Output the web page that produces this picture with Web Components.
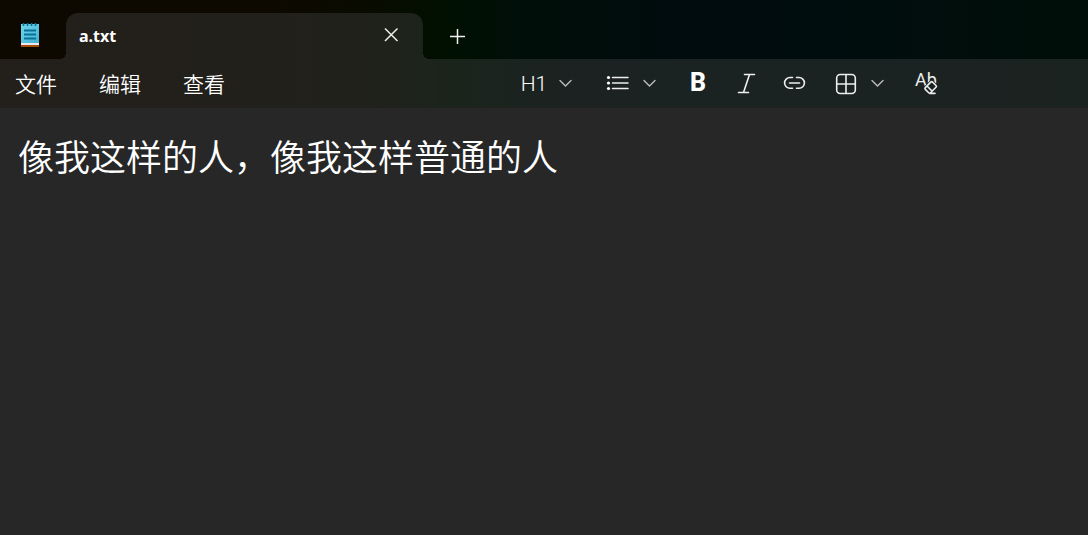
<!DOCTYPE html>
<html lang="zh-CN">
<head>
<meta charset="utf-8">
<title>a.txt</title>
<style>
html, body { height: 100%; margin: 0; }
body {
  background: #272727;
  color: #fff;
  font-family: "Noto Sans", "Noto Sans CJK SC", sans-serif;
}
</style>
</head>
<body>
<note-window>
  <note-tab slot="tabs">a.txt</note-tab>
  <menu-item slot="menu">文件</menu-item>
  <menu-item slot="menu">编辑</menu-item>
  <menu-item slot="menu">查看</menu-item>
  <tool-button slot="tools" menu label="标题"><span>H1</span></tool-button>
  <tool-button slot="tools" menu label="列表">
    <svg width="24" height="24" viewBox="0 0 24 24" fill="none" stroke="#eee" stroke-width="1.5" stroke-linecap="round"><path d="M6.5 6.5H22M6.5 12H22M6.5 17.5H22"/><g fill="#fff" stroke="none"><circle cx="2.5" cy="6.5" r="1.6"/><circle cx="2.5" cy="12" r="1.6"/><circle cx="2.5" cy="17.5" r="1.6"/></g></svg>
  </tool-button>
  <tool-button slot="tools" label="加粗"><b>B</b></tool-button>
  <tool-button slot="tools" label="倾斜">
    <svg width="24" height="24" viewBox="0 0 24 24" fill="none" stroke="#eee" stroke-width="1.6" stroke-linecap="round"><path d="M10.5 3.5H20.5M4.5 21.5H14.5M15.5 3.5L9.5 21.5"/></svg>
  </tool-button>
  <tool-button slot="tools" label="链接">
    <svg width="24" height="24" viewBox="0 0 24 24" fill="none" stroke="#eee" stroke-width="1.6" stroke-linecap="round"><path d="M10.5 6.5H8a5.3 5.3 0 0 0 0 10.8h2.5M14.5 6.5H17a5.3 5.3 0 0 1 0 10.8h-2.5M7.5 12h10"/></svg>
  </tool-button>
  <tool-button slot="tools" menu label="表格">
    <svg width="24" height="24" viewBox="0 0 24 24" fill="none" stroke="#eee" stroke-width="1.6"><rect x="2.7" y="3.5" width="18.6" height="19" rx="3.5"/><path d="M12 3.5V22.5M2.7 13H21.3"/></svg>
  </tool-button>
  <tool-button slot="tools" label="清除格式">
    <svg width="24" height="24" viewBox="0 0 24 24" overflow="visible"><text x="1" y="15" font-size="18" fill="#eee" font-family="Roboto, sans-serif">Ab</text><path d="M11.3 16.6L16.8 11.1q.9-.9 1.8 0l3.4 3.4q.9.9 0 1.8l-5.5 5.5q-.9.9-1.8 0l-3.4-3.4q-.9-.9 0-1.8z" fill="#1b2322" stroke="#1b2322" stroke-width="3"/><path d="M11.3 16.6L16.8 11.1q.9-.9 1.8 0l3.4 3.4q.9.9 0 1.8l-5.5 5.5q-.9.9-1.8 0l-3.4-3.4q-.9-.9 0-1.8zM13 15l5 5M15.6 22.4H21" fill="none" stroke="#eee" stroke-width="1.6" stroke-linecap="round"/></svg>
  </tool-button>
  <note-editor></note-editor>
</note-window>

<script>
const define = (name, html, setup) => customElements.define(name, class extends HTMLElement {
  constructor() {
    super();
    this.attachShadow({ mode: 'open' }).innerHTML = html;
  }
  connectedCallback() { if (setup) setup(this, this.shadowRoot); }
});

const reset = `button { margin: 0; padding: 0; border: 0; background: none; color: inherit; font: inherit; }
  svg { display: block; }`;

define('menu-item', `
  <style>${reset}
    :host { display: block; }
    button { display: block; padding-top: 2px; font-size: 21px; line-height: 32px; font-weight: 350; white-space: nowrap; }
  </style>
  <button type="button"><slot></slot></button>`);

define('tool-button', `
  <style>${reset}
    :host { display: block; }
    button { display: flex; align-items: center; gap: 12px; height: 32px; padding: 0 12px; }
    .icon { display: flex; align-items: center; justify-content: center; width: 24px; height: 24px; }
    .chevron { display: none; }
    :host([menu]) button { padding: 0 16px; }
    :host([menu]) .chevron { display: block; }
    ::slotted(svg) { display: block; flex: none; }
    ::slotted(span) { font: 300 21px/24px Roboto, sans-serif; padding-top: 2px; }
    ::slotted(b) { font: 800 25px/24px Roboto, sans-serif; }
  </style>
  <button type="button">
    <span class="icon"><slot></slot></span>
    <svg class="chevron" width="16" height="16" viewBox="0 0 16 16" fill="none" stroke="#bbb" stroke-width="1.4" stroke-linecap="round"><path d="M2 5.5L7.5 11L13 5.5"/></svg>
  </button>`, (host, root) => {
    root.querySelector('button').setAttribute('aria-label', host.getAttribute('label'));
  });

define('note-tab', `
  <style>${reset}
    :host {
      position: relative; display: flex; align-items: center; justify-content: space-between;
      box-sizing: border-box; width: 357px; height: 46px; padding: 0 24px 0 13px;
      border-radius: 12px 12px 0 0; background: var(--layer);
      font-size: 16px; line-height: 24px; font-weight: 700;
    }
    :host::before, :host::after {
      content: ""; position: absolute; bottom: 0; width: 6px; height: 6px;
    }
    :host::before { right: 100%; background: radial-gradient(circle at 0 0, transparent 6px, var(--layer) 6px); }
    :host::after { left: 100%; background: radial-gradient(circle at 100% 0, transparent 6px, var(--layer) 6px); }
  </style>
  <slot></slot>
  <button type="button" aria-label="关闭标签页">
    <svg width="16" height="20" viewBox="0 0 16 20" fill="none" stroke="#eee" stroke-width="1.5"><path d="M2 2.5L14.5 15M14.5 2.5L2 15"/></svg>
  </button>`);

define('note-editor', `
  <style>
    :host { display: flex; flex: 1; }
    textarea {
      flex: 1; min-width: 0; box-sizing: border-box; margin: 0; padding: 24px 18px; border: 0;
      outline: 0; resize: none; background: none; color: #fff;
      font: 36px/46px "Noto Sans CJK SC", sans-serif; font-weight: 350;
    }
  </style>
  <textarea aria-label="文本编辑器" spellcheck="false">像我这样的人，像我这样普通的人</textarea>`);

define('note-window', `
  <style>${reset}
    :host { display: flex; flex-direction: column; min-height: 100vh; --layer: rgba(68, 68, 68, .4); }
    header { background: linear-gradient(90deg, #0e0900 0%, #0d0900 25%, #090b00 34%, #030f00 39%, #001000 41%, #000e09 48%, #000c0d 62%, #000d0d 80%, #000e09 100%); }
    .strip { display: flex; align-items: flex-end; height: 59px; }
    .app { width: 20px; margin: 0 26px 11px 20px; }
    .add { margin: 0 0 13px 25px; }
    .bar { display: flex; align-items: center; box-sizing: border-box; height: 49px; padding-left: 15px; background: var(--layer); border-bottom: 1px solid #20201f; }
    nav { display: flex; gap: 42px; width: 491px; }
    .tools { display: flex; }
  </style>
  <header>
    <div class="strip">
      <svg class="app" width="20" height="26" viewBox="0 0 20 26">
        <defs><linearGradient id="paper" x2="1" y2="1"><stop stop-color="#74d5ee"/><stop offset="1" stop-color="#42b0d2"/></linearGradient></defs>
        <path fill="#a54c0d" d="M1 21h18v4H1z"/><path fill="#e8eaed" d="M1 20h18v3H1z"/>
        <path fill="url(#paper)" d="M1 2h18v19H1z"/>
        <path stroke="#087196" stroke-width="2" d="M4 8.5h12M4 12.5h12M4 16.5h12"/>
        <path stroke="#087196" stroke-width="1.6" d="M3.5 1v3M7.5 1v3M11.5 1v3M15.5 1v3"/>
      </svg>
      <slot name="tabs"></slot>
      <button class="add" type="button" aria-label="新建标签页">
        <svg width="18" height="18" viewBox="0 0 18 18" fill="none" stroke="#eee" stroke-width="1.5"><path d="M9.5 1v15M2 8.5h15"/></svg>
      </button>
    </div>
    <div class="bar">
      <nav><slot name="menu"></slot></nav>
      <div class="tools" role="toolbar"><slot name="tools"></slot></div>
    </div>
  </header>
  <slot></slot>`);
</script>
</body>
</html>
